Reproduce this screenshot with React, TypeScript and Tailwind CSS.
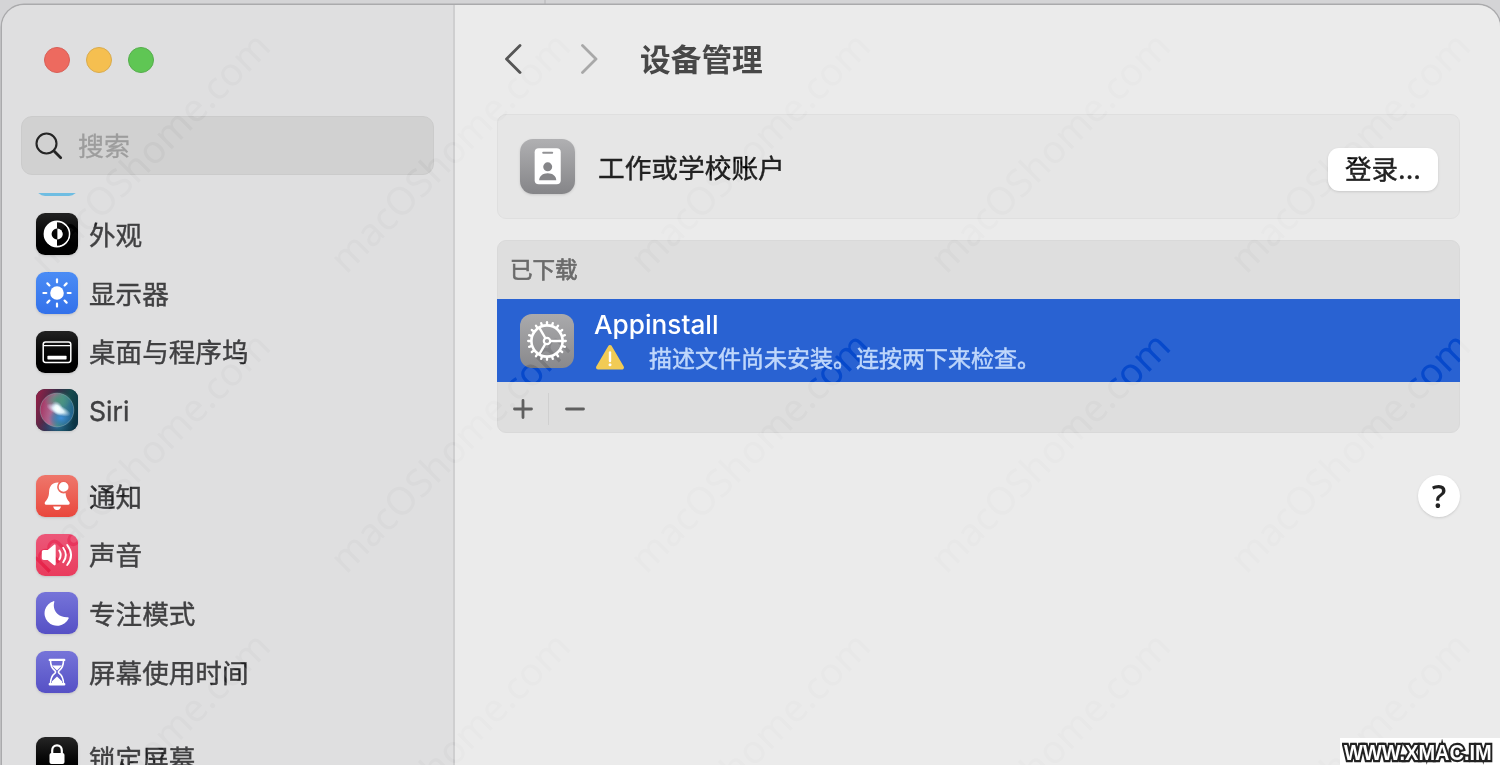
import React from 'react';

interface SidebarItem {
  label: string;
  tile: string;
  icon: React.ReactNode;
}

const FONT = "font-['Inter','Noto_Sans_CJK_SC',sans-serif]";

const AppearanceIcon = () => (
  <svg viewBox="0 0 42 42" className="w-full h-full">
    <circle cx="21" cy="21" r="12.6" fill="none" stroke="#fff" strokeWidth="1.6" />
    <path d="M21 8.4a12.6 12.6 0 0 0 0 25.2v-7.2a5.4 5.4 0 0 1 0-10.8z" fill="#fff" />
    <path d="M21.4 15.6a5.4 5.4 0 0 1 0 10.8z" fill="#fff" />
  </svg>
);

const DisplayIcon = () => (
  <svg viewBox="0 0 42 42" className="w-full h-full">
    <circle cx="21" cy="21" r="6.8" fill="#fff" />
    {[0, 45, 90, 135, 180, 225, 270, 315].map((angle) => (
      <path
        key={angle}
        d="M21 7.4v2.9"
        stroke="#fff"
        strokeWidth="2.2"
        strokeLinecap="round"
        transform={`rotate(${angle} 21 21)`}
      />
    ))}
  </svg>
);

const DockIcon = () => (
  <svg viewBox="0 0 42 42" className="w-full h-full">
    <rect x="7.2" y="11" width="27.6" height="20.4" rx="2.4" fill="none" stroke="#fff" strokeWidth="1.5" />
    <path d="M7.2 14.6h27.6" stroke="#fff" strokeWidth="1.2" />
    <rect x="11.4" y="24.8" width="19.2" height="3.6" rx="0.6" fill="#fff" />
  </svg>
);

const SiriIcon = () => (
  <svg viewBox="0 0 42 42" className="w-full h-full">
    <defs>
      <linearGradient id="siriBase" x1="0" y1="0.3" x2="1" y2="0.6">
        <stop offset="0" stopColor="#8c2147" />
        <stop offset="0.4" stopColor="#3a2c48" />
        <stop offset="0.7" stopColor="#164a4c" />
        <stop offset="1" stopColor="#0b3445" />
      </linearGradient>
      <linearGradient id="siriOrb" x1="0" y1="0.4" x2="1" y2="0.6">
        <stop offset="0" stopColor="#a53462" />
        <stop offset="0.35" stopColor="#b06a92" />
        <stop offset="0.6" stopColor="#4a8f8c" />
        <stop offset="1" stopColor="#1d5f8e" />
      </linearGradient>
      <radialGradient id="siriGreen">
        <stop offset="0" stopColor="#49947c" />
        <stop offset="1" stopColor="#49947c" stopOpacity="0" />
      </radialGradient>
      <radialGradient id="siriBlue">
        <stop offset="0" stopColor="#3f8fdc" />
        <stop offset="1" stopColor="#2065b0" stopOpacity="0" />
      </radialGradient>
      <radialGradient id="siriGlow">
        <stop offset="0" stopColor="#fff" />
        <stop offset="0.4" stopColor="#eff" stopOpacity="0.9" />
        <stop offset="1" stopColor="#cdf" stopOpacity="0" />
      </radialGradient>
    </defs>
    <rect width="42" height="42" fill="url(#siriBase)" />
    <ellipse cx="21" cy="38" rx="18" ry="9" fill="url(#siriBlue)" opacity="0.5" />
    <circle cx="21" cy="21" r="16.8" fill="url(#siriOrb)" />
    <ellipse cx="22" cy="11" rx="14" ry="9" fill="url(#siriGreen)" />
    <ellipse cx="25" cy="29" rx="13" ry="9" fill="url(#siriBlue)" />
    <circle cx="21" cy="21" r="16.8" fill="none" stroke="#9ab5bd" strokeOpacity="0.55" strokeWidth="0.8" />
    <ellipse cx="22.5" cy="21" rx="13" ry="5" fill="url(#siriGlow)" transform="rotate(22 22.5 21)" />
    <ellipse cx="21.5" cy="19.5" rx="5.5" ry="8" fill="url(#siriGlow)" transform="rotate(-30 21.500 19.500)" />
  </svg>
);

const BellIcon = () => (
  <svg viewBox="0 0 42 42" className="w-full h-full">
    <path
      d="M21.6 7.5c-5.3 0-8.3 3.9-8.5 9.3-.2 5.200-1.700 7.500-3.700 9.800-1.200 1.400-.9 3.200.9 3.200h21.800c1.800 0 2.100-1.800.9-3.200-2-2.300-3.300-4.600-3.500-9.800-.2-5.400-3.600-9.300-7.900-9.300z"
      fill="#fff"
    />
    <path d="M17.2 31.6h7.8c-.5 2.200-1.900 3.500-3.900 3.500s-3.400-1.300-3.900-3.500z" fill="#fff" />
    <circle cx="27.6" cy="11.900" r="5.700" fill="#fff" stroke="#ec675c" strokeWidth="1.600" />
  </svg>
);

const SoundIcon = () => (
  <svg viewBox="0 0 42 42" className="w-full h-full">
    <path
      d="M5.800 18.200c0-1.500.7-2.200 2-2.200h3.900l6-5c1-.8 2-.3 2 .9v18.200c0 1.200-1 1.700-2 .9l-6-5H7.800c-1.300 0-2-.7-2-2.200z"
      fill="#fff"
    />
    <path
      d="M23.300 16.500q2.800 4.500 0 9M27.200 13.700q5.300 7.300 0 14.600M31.200 11q7.800 10 0 20"
      fill="none"
      stroke="#fff"
      strokeWidth="1.900"
      strokeLinecap="round"
    />
  </svg>
);

const MoonIcon = () => (
  <svg viewBox="0 0 42 42" className="w-full h-full">
    <path d="M17.500 9.200c.6-.4 1 .1.800.8-2.300 7.800 3.300 15.600 13.300 15.300.8 0 1.400.4 1 1.200A12.600 12.600 0 1 1 17.500 9.200z" fill="#fff" />
  </svg>
);

const HourglassIcon = () => (
  <svg viewBox="0 0 42 42" className="w-full h-full">
    <path
      d="M14.500 9.200h13c0 5.500-1 8-4.500 10.700-.7.600-.7 1.600 0 2.200 3.500 2.700 4.500 5.200 4.500 10.700h-13c0-5.500 1-8 4.500-10.700.7-.6.7-1.600 0-2.200-3.500-2.700-4.500-5.200-4.500-10.700z"
      fill="none"
      stroke="#fff"
      strokeWidth="1.600"
    />
    <path d="M13.800 8.900h14.400M13.800 33.200h14.400" stroke="#fff" strokeWidth="2.400" strokeLinecap="round" />
    <path d="M16 14.500h10L21 19.500zM21 25.500l5 4.700V32H16v-1.800z" fill="#fff" />
  </svg>
);

const LockIcon = () => (
  <svg viewBox="0 0 42 42" className="w-full h-full">
    <path d="M16.200 18v-4.600c0-3 1.900-5.100 4.800-5.100s4.800 2.100 4.800 5.100V18" fill="none" stroke="#fff" strokeWidth="2.200" />
    <rect x="13.500" y="16" width="15" height="11" rx="2" fill="#fff" />
  </svg>
);

const GearIcon = () => (
  <svg viewBox="0 0 54 54" className="w-full h-full">
    <g fill="none" stroke="#fff">
      <circle cx="27" cy="27" r="15.600" strokeWidth="2.600" />
      <circle cx="27" cy="27" r="3.200" strokeWidth="2.200" />
      {[0, 120, 240].map((angle) => (
        <path key={angle} d="M30.200 27h12" strokeWidth="2.400" transform={`rotate(${angle} 27 27)`} />
      ))}
      {Array.from({ length: 20 }, (_, i) => (
        <path key={i} d="M27 11V8.200" strokeWidth="2.300" strokeLinecap="round" transform={`rotate(${i * 18} 27 27)`} />
      ))}
    </g>
  </svg>
);

const BadgeIcon = () => (
  <svg viewBox="0 0 54 54" className="w-full h-full">
    <rect x="14.400" y="9" width="25.600" height="35.400" rx="4" fill="#fff" />
    <rect x="21.800" y="12.400" width="10.800" height="2" rx="1" fill="#929295" />
    <circle cx="27.200" cy="27.300" r="4.400" fill="#858588" />
    <path d="M18.800 40.600c0-4.300 3.700-7 8.400-7s8.400 2.700 8.400 7z" fill="#858588" />
  </svg>
);

const groups: SidebarItem[][] = [
  [
    { label: '外观', tile: 'bg-linear-to-b from-[#222] to-black', icon: <AppearanceIcon /> },
    { label: '显示器', tile: 'bg-linear-to-b from-[#4b8cf5] to-[#3371ea]', icon: <DisplayIcon /> },
    { label: '桌面与程序坞', tile: 'bg-linear-to-b from-[#222] to-black', icon: <DockIcon /> },
    { label: 'Siri', tile: 'bg-[#234]', icon: <SiriIcon /> },
  ],
  [
    { label: '通知', tile: 'bg-linear-to-b from-[#ee766b] to-[#e9463c]', icon: <BellIcon /> },
    { label: '声音', tile: 'bg-linear-to-b from-[#ec5779] to-[#e93b5d]', icon: <SoundIcon /> },
    { label: '专注模式', tile: 'bg-linear-to-b from-[#7674d9] to-[#5650c5]', icon: <MoonIcon /> },
    { label: '屏幕使用时间', tile: 'bg-linear-to-b from-[#7674d9] to-[#5650c5]', icon: <HourglassIcon /> },
  ],
  [{ label: '锁定屏幕', tile: 'bg-linear-to-b from-[#262626] to-black', icon: <LockIcon /> }],
];

const Sidebar = () => (
  <aside className="w-[453px] shrink-0 h-full flex flex-col bg-[#dfdfe0] border-r-2 border-[#cfcfd0] overflow-hidden">
    <div className="flex gap-4 pl-[42px] pt-[42px]">
      <span className="w-[26px] h-[26px] rounded-full bg-[#ed6a5f] border border-[#d85f57]" />
      <span className="w-[26px] h-[26px] rounded-full bg-[#f5bf50] border border-[#d9ab4d]" />
      <span className="w-[26px] h-[26px] rounded-full bg-[#5fc654] border border-[#55ae4c]" />
    </div>

    <div className="mt-[43px] ml-[19px] w-[413px] h-[59px] shrink-0 rounded-[11px] bg-[#d1d1d1] border border-[#cbcbcb] flex items-center pl-3">
      <svg viewBox="0 0 30 30" className="w-[30px] h-[30px]" fill="none" stroke="#252525" strokeLinecap="round">
        <circle cx="12.500" cy="12.500" r="10" strokeWidth="2.100" />
        <path d="M20 20l6.700 6.700" strokeWidth="2.800" />
      </svg>
      <span className="ml-[14px] pt-[3px] text-[26px] leading-none text-[#9d9d9d] [-webkit-text-stroke:0.3px]">搜索</span>
    </div>

    {/* last pixels of the row scrolled off the top */}
    <div className="mt-[18px] ml-[34px] h-[3px] shrink-0 flex items-end overflow-hidden">
      <span className="w-[42px] h-[42px] shrink-0 rounded-[9px] bg-[#6fbde2]" />
    </div>

    <nav className="flex flex-col gap-[27px] mt-[9px]">
      {groups.map((group, index) => (
        <ul key={index}>
          {group.map((item) => (
            <li key={item.label} className="h-[58.700px] flex items-center pl-[34px]">
              <span className={`w-[42px] h-[42px] rounded-[9px] overflow-hidden shadow-sm ${item.tile}`}>{item.icon}</span>
              <span className="ml-[11px] pt-[2px] text-[26.600px] leading-none text-[#404042] [-webkit-text-stroke:0.4px]">
                {item.label}
              </span>
            </li>
          ))}
        </ul>
      ))}
    </nav>
  </aside>
);

const Content = () => (
  <main className="flex-1 flex flex-col pl-[42px] pr-10 bg-[#ebebeb]">
    <header className="h-[109px] shrink-0 flex items-center pl-[7px]">
      <svg viewBox="0 0 18 30" className="-mt-0.5 w-[18px] h-[30px]" fill="none" stroke="#555" strokeWidth="2.800" strokeLinecap="round" strokeLinejoin="round">
        <path d="M16 1.500L2.500 15 16 28.500" />
      </svg>
      <svg viewBox="0 0 18 30" className="-mt-0.5 ml-[58px] w-[18px] h-[30px]" fill="none" stroke="#a8a8a8" strokeWidth="2.800" strokeLinecap="round" strokeLinejoin="round">
        <path d="M2.500 1.500L16 15 2.500 28.500" />
      </svg>
      <h1 className="ml-[42px] pt-px text-[30.700px] leading-none font-bold text-[#474747]">设备管理</h1>
    </header>

    <section className="h-[105px] shrink-0 rounded-[9px] bg-[#e6e6e6] border border-[#dfdfdf] flex items-center pl-[22px] pr-5">
      <span className="w-[55px] h-[55px] rounded-[13px] overflow-hidden shadow-sm bg-linear-to-b from-[#b0b0b2] to-[#858588]">
        <BadgeIcon />
      </span>
      <span className="ml-[23px] pt-[3px] text-[26.700px] leading-none text-[#222] [-webkit-text-stroke:0.4px]">工作或学校账户</span>
      <button className="ml-auto mt-[5px] mr-px w-[110px] h-[43px] rounded-[11px] bg-white shadow text-[26.500px] leading-none text-[#222] [-webkit-text-stroke:0.4px]">
        登录...
      </button>
    </section>

    <section className="mt-[21px] h-[193px] shrink-0 rounded-[9px] bg-[#dedede] border border-[#d9d9d9] flex flex-col">
      <h2 className="h-[58px] flex items-center pl-[12px] text-[22.500px] leading-none text-[#6b6b6b] [-webkit-text-stroke:0.7px]">已下载</h2>
      <div className="-mx-px h-[83px] bg-[#2962d2] flex items-center pl-[23px]">
        <span className="w-[54px] h-[54px] rounded-[12px] overflow-hidden bg-linear-to-b from-[#aaaaac] to-[#89898c]">
          <GearIcon />
        </span>
        <div className="ml-5 pt-1">
          <p className="text-[26.200px] leading-[32px] font-medium text-white">Appinstall</p>
          <div className="flex items-center h-[36px]">
            <svg viewBox="0 0 30 27" className="w-[30px] h-[27px] ml-px -mt-0.5">
              <path d="M15 3L27 23.500H3z" fill="#f1cb55" stroke="#f1cb55" strokeWidth="4" strokeLinejoin="round" />
              <path d="M15 8.500v8.500" stroke="#fff" strokeWidth="2.400" strokeLinecap="round" />
              <circle cx="15" cy="20.800" r="1.500" fill="#fff" />
            </svg>
            <span className="ml-6 pt-0.5 text-[23px] leading-none text-[#bfd7fb] [-webkit-text-stroke:0.5px]">
              描述文件尚未安装。连按两下来检查。
            </span>
          </div>
        </div>
      </div>
      <div className="flex-1 flex items-center pl-[15px] pt-[3px]">
        <svg viewBox="0 0 20 20" className="w-5 h-5" stroke="#5f5f5f" strokeWidth="2.800" strokeLinecap="round">
          <path d="M10 1.500v17M1.500 10h17" />
        </svg>
        <span className="ml-[15px] w-px h-8 bg-[#d0d0d0]" />
        <svg viewBox="0 0 20 20" className="ml-4 w-5 h-5" stroke="#5f5f5f" strokeWidth="2.800" strokeLinecap="round">
          <path d="M1.500 10h17" />
        </svg>
      </div>
    </section>

    <button className="mt-[42px] ml-auto w-[42px] h-[42px] rounded-full bg-white shadow flex items-center justify-center font-['Open_Sans',sans-serif] text-[32px] leading-none font-semibold text-[#222]">
      ?
    </button>
  </main>
);

const Watermarks = () => (
  <div className="absolute -left-px top-px grid grid-cols-[repeat(6,300px)] auto-rows-[300px] mix-blend-color-burn pointer-events-none">
    {Array.from({ length: 18 }, (_, i) => (
      <div key={i} className="flex items-center justify-center">
        <span className="-rotate-45 whitespace-nowrap font-['Noto_Sans',sans-serif] text-[38.500px] leading-none text-[#dcdcdc]">
          macOShome.com
        </span>
      </div>
    ))}
  </div>
);

const App: React.FC = () => (
  <div className={`relative isolate w-[1500px] h-[765px] overflow-hidden bg-[#d4d4d6] pl-[2px] ${FONT}`}>
    <div className="h-[5px] pl-[542px]">
      <div className="w-[2px] h-full bg-[#c4c4c6]" />
    </div>
    <div className="h-[760px] flex rounded-t-[22px] overflow-hidden shadow-[0_0_0_1.500px_#aaaaac]">
      <Sidebar />
      <Content />
    </div>
    <Watermarks />
    <div className="absolute right-0 bottom-0 w-[160px] h-[27px] bg-white flex items-center pl-[4px] pt-px font-['Liberation_Sans',sans-serif] font-bold text-[20px] leading-none text-white [-webkit-text-stroke:4px_#222] [paint-order:stroke_fill]">
      <span className="origin-left scale-y-110">WWW.XMAC.IM</span>
    </div>
  </div>
);

export default App;
